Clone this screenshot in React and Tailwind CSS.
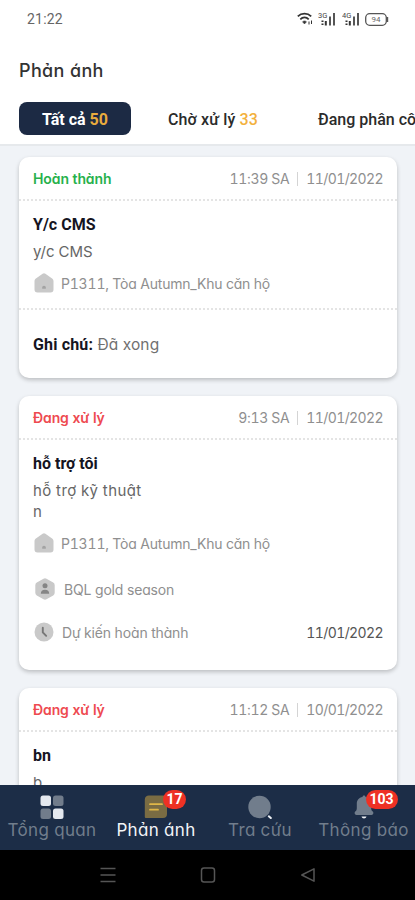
import clsx from 'clsx';

const tickets = [
  {
    id: 1,
    status: 'Hoàn thành',
    done: true,
    time: '11:39 SA',
    date: '11/01/2022',
    title: 'Y/c CMS',
    lines: ['y/c CMS'],
    place: 'P1311, Tòa Autumn_Khu căn hộ',
    note: 'Đã xong',
  },
  {
    id: 2,
    status: 'Đang xử lý',
    time: '9:13 SA',
    date: '11/01/2022',
    title: 'hỗ trợ tôi',
    lines: ['hỗ trợ kỹ thuật', 'n'],
    place: 'P1311, Tòa Autumn_Khu căn hộ',
    team: 'BQL gold season',
    due: '11/01/2022',
  },
  {
    id: 3,
    status: 'Đang xử lý',
    time: '11:12 SA',
    date: '10/01/2022',
    title: 'bn',
    lines: ['b'],
    place: 'P1311, Tòa Autumn_Khu căn hộ',
  },
];

const HomeIcon = () => (
  <svg className="w-5 h-5 shrink-0" viewBox="0 0 20 20">
    <path d="M8.600.8a2.300 2.300 0 0 1 2.800 0l6.700 4.600c.9.700 1.400 1.600 1.400 2.700v8.400a3 3 0 0 1-3 3h-13a3 3 0 0 1-3-3V8.100c0-1.100.5-2 1.400-2.700z" fill="#c9c9c9" />
    <path d="M8.200 15.800v-1.300a1.800 1.800 0 0 1 3.600 0v1.300z" fill="#a3a3a3" />
  </svg>
);

const TeamIcon = () => (
  <svg className="w-5 h-[22px] shrink-0" viewBox="0 0 20 22">
    <path d="M8.500.8a3 3 0 0 1 3 0l6.700 3.800A3 3 0 0 1 19.700 7.200v7.600a3 3 0 0 1-1.500 2.600l-6.700 3.800a3 3 0 0 1-3 0l-6.700-3.800A3 3 0 0 1 .3 14.800V7.200a3 3 0 0 1 1.500-2.600z" fill="#c9c9c9" />
    <circle cx="10" cy="7.800" r="2.500" fill="#858585" />
    <path d="M5.800 15.700c0-2.500 1.500-3.900 4.200-3.900s4.200 1.400 4.200 3.900z" fill="#858585" />
  </svg>
);

const ClockIcon = () => (
  <svg className="w-5 h-5 shrink-0" viewBox="0 0 20 20">
    <circle cx="10" cy="10" r="9.500" fill="#c9c9c9" />
    <path d="M8.800 5.700v4.600l3.400 3.500" fill="none" stroke="#777" strokeWidth="1.900" strokeLinecap="round" />
  </svg>
);

const GridIcon = () => (
  <svg className="w-6 h-6" viewBox="0 0 24 24">
    <rect x="0.500" y="0.500" width="10.500" height="10.500" rx="2.500" fill="#e4e8ef" />
    <rect x="13" y="0.500" width="10.500" height="10.500" rx="2.500" fill="#717c8b" />
    <rect x="0.500" y="13.500" width="10.500" height="10.500" rx="2.500" fill="#717c8b" />
    <rect x="13" y="13.500" width="10.500" height="10.500" rx="2.500" fill="#e4e8ef" />
  </svg>
);

const MessageIcon = () => (
  <svg className="w-6 h-6" viewBox="0 0 24 24">
    <path d="M5 .5h14a4 4 0 0 1 4 4V19a4 4 0 0 1-4 4H1.800a1 1 0 0 1-1-1V4.500a4 4 0 0 1 4.200-4z" fill="#7a6c43" />
    <path d="M6 9.200h12M6 14.700h8" stroke="#dfb748" strokeWidth="1.800" strokeLinecap="round" />
  </svg>
);

const SearchIcon = () => (
  <svg className="w-6 h-6" viewBox="0 0 24 24">
    <circle cx="11.500" cy="12" r="11.200" fill="#717d8c" />
    <path d="M20.800 21.300l2 1.800" stroke="#eef1f5" strokeWidth="2" strokeLinecap="round" />
  </svg>
);

const BellIcon = () => (
  <svg className="w-6 h-6" viewBox="0 0 24 24">
    <path d="M12 .5c1 0 1.500.6 1.500 1.600 3.600.7 5.700 3.200 5.700 6.700v4.400c0 1.500.5 2.400 1.600 3.400 1.100 1.100.7 3.400-1.200 3.400H4.400c-1.900 0-2.300-2.300-1.200-3.400 1.100-1 1.600-1.900 1.600-3.400V8.800c0-3.500 2.100-6 5.700-6.700 0-1 .5-1.600 1.500-1.600z" fill="#717d8c" />
    <path d="M9.500 21.500h5c-.4 1.300-1.300 1.900-2.500 1.900s-2.100-.6-2.500-1.900z" fill="#eef1f5" />
  </svg>
);

const Signal = ({ label }) => (
  <svg className="w-[18px] h-[14px]" viewBox="0 0 18 14">
    <text x="0" y="6" fontSize="7.500" fill="#444" fontFamily="Roboto, sans-serif">{label}</text>
    <path d="M4.500 8.500v1.500M7.800 9v4.500M4.500 11.500v1.500" stroke="#333" strokeWidth="2" />
    <path d="M12 4.500v9M16 1v12.500" stroke="#444" strokeWidth="1.800" />
  </svg>
);

const StatusBar = () => (
  <div className="h-[38px] pl-[27px] pr-[26px] flex items-center justify-between text-[#666]">
    <span className="font-['Roboto',sans-serif] text-[14px] tracking-[0.2px]">21:22</span>
    <div className="flex items-center">
      <svg className="w-4 h-[14px] mr-[5px]" viewBox="0 0 16 14" fill="none" stroke="#333">
        <path d="M.8 4.300C4.500.7 10.500.7 14.200 4.300" strokeWidth="1.800" />
        <path d="M3.300 7.300c2.500-2.500 6-2.500 8.400 0" strokeWidth="1.700" />
        <path d="M5.500 9.800c1.300-1.200 2.700-1.200 4 0L7.500 12z" fill="#333" strokeWidth=".5" />
        <path d="M12 12.500V9.500M14.500 8.500v3.500" strokeWidth="1" />
      </svg>
      <div className="mr-[6px]"><Signal label="3G" /></div>
      <div className="mr-[5px]"><Signal label="4G" /></div>
      <svg className="w-[24px] h-[13px]" viewBox="0 0 24 13">
        <rect x=".7" y=".7" width="20.600" height="11.600" rx="4" fill="none" stroke="#555" strokeWidth="1.300" />
        <path d="M22.300 4v5" stroke="#555" strokeWidth="1.800" />
        <text x="11" y="9.300" fontSize="8" fill="#666" textAnchor="middle" fontFamily="Roboto, sans-serif">94</text>
      </svg>
    </div>
  </div>
);

const Tabs = () => (
  <div className="flex items-center pl-[19px] font-['Roboto',sans-serif] text-[16px] font-medium text-[#2b2b2b] whitespace-nowrap">
    <div className="w-[112px] h-[33px] shrink-0 rounded-lg bg-[#1c2a44] text-white font-bold flex items-center justify-center">
      <span className="pt-[2px]">Tất cả <span className="text-[#e9ab3d]">50</span></span>
    </div>
    <div className="w-[187px] shrink-0 pl-[37px] pt-[2px] tracking-[0.12px]">
      Chờ xử lý <span className="text-[#f3b13c]">33</span>
    </div>
    <div className="shrink-0 pt-[2px]">Đang phân công</div>
  </div>
);

const TicketCard = ({ ticket }) => (
  <div className="shrink-0 rounded-[10px] bg-white shadow-[0_2px_4px_rgba(0,0,0,0.22)] text-[14px] text-[#8f8f8f]">
    <div className="h-[44px] px-[14px] flex items-center justify-between border-b-2 border-dotted border-[#e4e4e4]">
      <span className={clsx('font-semibold tracking-[-0.1px]', ticket.done ? 'text-[#27b14b]' : 'text-[#ee4a50]')}>
        {ticket.status}
      </span>
      <div className="flex items-center text-[#8f8f8f] pt-px">
        <span className="tracking-[-0.35px]">{ticket.time}</span>
        <span className="w-px h-[14px] bg-[#d4d4d4] mx-2"></span>
        <span className="tracking-[-0.6px]">{ticket.date}</span>
      </div>
    </div>

    <div className="px-[14px] pt-[13px]">
      <h2 className="h-[22px] leading-[22px] font-['Roboto',sans-serif] text-[16px] font-bold text-[#15151f]">{ticket.title}</h2>
      <div className="mt-[5px] text-[15px] leading-[21px] tracking-[0.4px] text-[#666]">
        {ticket.lines.map((line) => <p key={line} className={clsx(line.length > 8 || 'tracking-[0]')}>{line}</p>)}
      </div>
      <div className="mt-[11px] h-5 flex items-center gap-[7px] pl-[1px]">
        <HomeIcon />
        <span className="tracking-[-0.2px]">{ticket.place}</span>
      </div>
      {ticket.team && (
        <div className="mt-[26px] h-5 flex items-center gap-[9px] pl-[2px]">
          <TeamIcon />
          <span className="tracking-[-0.15px]">{ticket.team}</span>
        </div>
      )}
      {ticket.due && (
        <div className="mt-[23px] h-5 flex items-center gap-[8px] pl-[1px]">
          <ClockIcon />
          <span className="tracking-[-0.15px]">Dự kiến hoàn thành</span>
          <span className="ml-auto tracking-[-0.6px] text-[#555]">{ticket.due}</span>
        </div>
      )}
      <div className={ticket.note ? 'h-[15px]' : 'h-[28px]'}></div>
    </div>

    {ticket.note && (
      <div className="h-[70px] px-[14px] flex items-center border-t-2 border-dotted border-[#e4e4e4] text-[15.500px] text-[#707070]">
        <p className="pt-px tracking-[0.15px]"><b className="font-['Roboto',sans-serif] text-[16px] text-[#15151f]">Ghi chú:</b> {ticket.note}</p>
      </div>
    )}
  </div>
);

const NavItem = ({ icon, label, badge, badgeClass, active, className }) => (
  <div className={clsx('flex flex-col items-center pt-[10px]', className, active ? 'text-[#f2f4f7]' : 'text-[#717d8c]')}>
    <div className="relative h-6">
      {icon}
      {badge && (
        <span className={clsx("absolute -top-[5px] h-[19px] rounded-full bg-[#ee3124] text-white font-['Roboto',sans-serif] text-[14px] font-bold flex items-center justify-center", badgeClass)}>
          {badge}
        </span>
      )}
    </div>
    <span className="mt-[1px] text-[17px] leading-5 tracking-[0.35px] whitespace-nowrap">{label}</span>
  </div>
);

const BottomNav = () => (
  <nav className="h-[65px] shrink-0 flex bg-[#1c2d47]">
    <NavItem className="w-[104px]" icon={<GridIcon />} label="Tổng quan" />
    <NavItem className="w-[104px]" icon={<MessageIcon />} label="Phản ánh" badge="17" badgeClass="left-[19px] w-[23px]" active />
    <NavItem className="w-[104px]" icon={<SearchIcon />} label="Tra cứu" />
    <NavItem className="w-[103px]" icon={<BellIcon />} label="Thông báo" badge="103" badgeClass="left-[14px] w-[32px]" />
  </nav>
);

const SystemBar = () => (
  <div className="h-[50px] shrink-0 bg-black flex items-center justify-center gap-[84px]">
    <svg className="w-4 h-4" viewBox="0 0 16 16">
      <path d="M.5 1.500h15M.5 8h15M.5 14.500h15" stroke="#555" strokeWidth="1.600" />
    </svg>
    <svg className="w-4 h-4" viewBox="0 0 16 16">
      <rect x="1.500" y="1" width="13" height="14" rx="2.500" fill="none" stroke="#555" strokeWidth="1.500" />
    </svg>
    <svg className="w-4 h-4" viewBox="0 0 16 16">
      <path d="M14 1.800v12.400L1.800 8z" fill="none" stroke="#555" strokeWidth="1.500" strokeLinejoin="round" />
    </svg>
  </div>
);

function App() {
  return (
    <div className="w-full h-[900px] flex flex-col overflow-hidden bg-[#f0f3f7] font-['Inter',sans-serif] [font-feature-settings:'cv11','tnum']">
      <header className="h-[146px] shrink-0 bg-white border-b-2 border-[#e6e9ec]">
        <StatusBar />
        <h1 className="h-[64px] pl-[19px] pt-[22px] text-[18px] leading-[22px] tracking-[0.35px] font-medium text-[#333]">Phản ánh</h1>
        <Tabs />
      </header>
      <main className="flex-1 min-h-0 overflow-hidden flex flex-col gap-[18px] pt-[11px] pl-[19px] pr-[18px]">
        {tickets.map((ticket) => <TicketCard key={ticket.id} ticket={ticket} />)}
      </main>
      <BottomNav />
      <SystemBar />
    </div>
  );
}

export default App;
